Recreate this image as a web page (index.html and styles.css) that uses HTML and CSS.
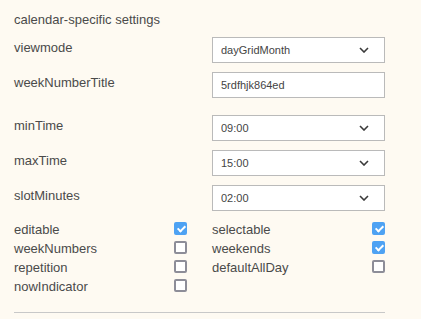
FILE: index.html
```html
<!DOCTYPE html>
<html lang="en">
<head>
    <meta charset="UTF-8" />
    <meta name="viewport" content="width=device-width, initial-scale=1.0"/>
    <title>Calendar settings</title>
    <link rel="stylesheet" href="styles.css">
</head>
<body>
<div class="settings">
    <div class="settings-title">calendar-specific settings</div>

    <div class="field">
        <label class="field-label" for="viewmode">viewmode</label>
        <div class="select-wrap">
            <select id="viewmode" class="field-control">
                <option>dayGridMonth</option>
                <option>timeGridWeek</option>
                <option>timeGridDay</option>
            </select>
            <svg class="chevron" width="10" height="6" viewBox="0 0 10 6"><path d="M1 1 L5 5 L9 1" fill="none" stroke="#3a3a3a" stroke-width="1.6"/></svg>
        </div>
    </div>

    <div class="field field-spaced">
        <label class="field-label" for="weekNumberTitle">weekNumberTitle</label>
        <input type="text" id="weekNumberTitle" class="field-control" value="5rdfhjk864ed"/>
    </div>

    <div class="field">
        <label class="field-label" for="minTime">minTime</label>
        <div class="select-wrap">
            <select id="minTime" class="field-control"><option>09:00</option></select>
            <svg class="chevron" width="10" height="6" viewBox="0 0 10 6"><path d="M1 1 L5 5 L9 1" fill="none" stroke="#3a3a3a" stroke-width="1.6"/></svg>
        </div>
    </div>

    <div class="field">
        <label class="field-label" for="maxTime">maxTime</label>
        <div class="select-wrap">
            <select id="maxTime" class="field-control"><option>15:00</option></select>
            <svg class="chevron" width="10" height="6" viewBox="0 0 10 6"><path d="M1 1 L5 5 L9 1" fill="none" stroke="#3a3a3a" stroke-width="1.6"/></svg>
        </div>
    </div>

    <div class="field">
        <label class="field-label" for="slotMinutes">slotMinutes</label>
        <div class="select-wrap">
            <select id="slotMinutes" class="field-control"><option>02:00</option></select>
            <svg class="chevron" width="10" height="6" viewBox="0 0 10 6"><path d="M1 1 L5 5 L9 1" fill="none" stroke="#3a3a3a" stroke-width="1.6"/></svg>
        </div>
    </div>

    <div class="checks">
        <label class="check"><span>editable</span><input type="checkbox" checked></label>
        <label class="check"><span>selectable</span><input type="checkbox" checked></label>
        <label class="check"><span>weekNumbers</span><input type="checkbox"></label>
        <label class="check"><span>weekends</span><input type="checkbox" checked></label>
        <label class="check"><span>repetition</span><input type="checkbox"></label>
        <label class="check"><span>defaultAllDay</span><input type="checkbox"></label>
        <label class="check"><span>nowIndicator</span><input type="checkbox"></label>
    </div>

    <hr class="divider">
</div>
</body>
</html>
```

FILE: styles.css
```css
html, body { margin: 0; padding: 0; }
body {
    background: #fefaf2;
    font-family: 'Liberation Sans', Arial, sans-serif;
    font-size: 13px; line-height: 15px; color: #4a4a4a;
}
.settings { width: 371px; padding: 12px 0 0 14px; }
.settings-title { margin-bottom: 10px; }

.field {
    display: grid; grid-template-columns: 1fr 1fr; column-gap: 25px;
    align-items: start; margin-bottom: 9px;
}
.field-spaced { margin-bottom: 17px; }
.field-label { padding-top: 3px; }

.select-wrap { position: relative; }
.field-control {
    box-sizing: border-box; width: 100%; height: 26px; margin: 0;
    padding: 0 24px 0 8px;
    border: 1px solid #bababa; border-radius: 0; background: #fff;
    font-family: 'Liberation Sans', Arial, sans-serif; font-size: 11px; color: #444;
    appearance: none; -webkit-appearance: none; outline: none;
}
.chevron { position: absolute; right: 16px; top: 10px; pointer-events: none; }

.checks {
    display: grid; grid-template-columns: 1fr 1fr; column-gap: 25px;
    margin-top: 11px;
}
.check { display: flex; justify-content: space-between; align-items: flex-start; height: 19px; }
.check input {
    appearance: none; -webkit-appearance: none; margin: 0 0 0 0;
    width: 13px; height: 13px; box-sizing: border-box;
    border: 2px solid #8d8d98; border-radius: 2px; background: #fff;
    position: relative;
}
.check input:checked { background: #4ea2f3; border-color: #4ea2f3; }
.check input:checked::after {
    content: ""; position: absolute; left: 3px; top: 0px;
    width: 3px; height: 6px;
    border: solid #fff; border-width: 0 2px 2px 0;
    transform: rotate(45deg);
}

.divider { margin: 14px 0 0 0; border: 0; border-top: 1px solid #c8c8c8; }
```
